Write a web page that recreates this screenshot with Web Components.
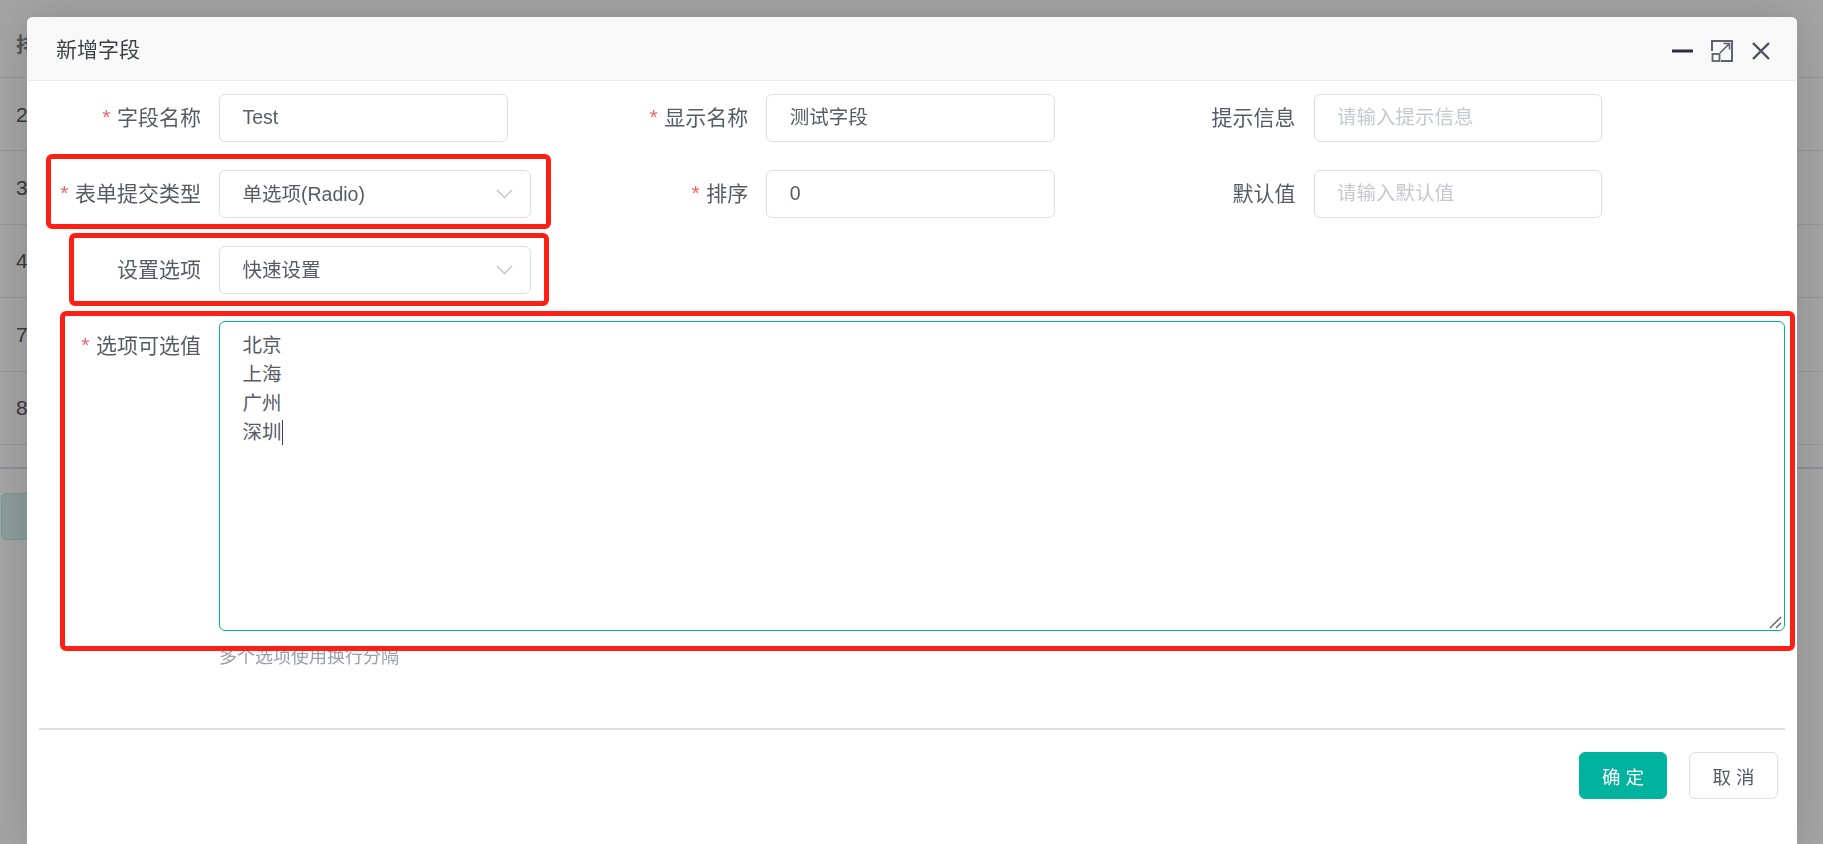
<!DOCTYPE html>
<html lang="zh-CN">
<head>
<meta charset="utf-8">
<title>新增字段</title>
<style>
html,body{margin:0;padding:0;height:100%;overflow:hidden;background:#a3a3a3;}
body{font-family:"Liberation Sans","Noto Sans CJK SC",sans-serif;color:#565b66;}
</style>
</head>
<body>
<x-backdrop></x-backdrop>
<x-dialog heading="新增字段">
  <x-form-row>
    <x-field label="字段名称" required><x-input value="Test"></x-input></x-field>
    <x-field label="显示名称" required><x-input value="测试字段"></x-input></x-field>
    <x-field label="提示信息"><x-input placeholder="请输入提示信息"></x-input></x-field>
  </x-form-row>
  <x-form-row>
    <x-field label="表单提交类型" required><x-select value="单选项(Radio)"></x-select></x-field>
    <x-field label="排序" required><x-input value="0"></x-input></x-field>
    <x-field label="默认值"><x-input placeholder="请输入默认值"></x-input></x-field>
  </x-form-row>
  <x-form-row>
    <x-field label="设置选项"><x-select value="快速设置"></x-select></x-field>
  </x-form-row>
  <x-form-row wide>
    <x-field label="选项可选值" required wide hint="多个选项使用换行分隔">
      <x-textarea lines="北京|上海|广州|深圳"></x-textarea>
    </x-field>
  </x-form-row>
  <x-button slot="footer" primary>确 定</x-button>
  <x-button slot="footer">取 消</x-button>
  <x-mark slot="marks" style="left:19px;top:137px;width:505px;height:75px"></x-mark>
  <x-mark slot="marks" style="left:42px;top:216px;width:480px;height:73px"></x-mark>
  <x-mark slot="marks" style="left:33px;top:294px;width:1735px;height:340px"></x-mark>
</x-dialog>

<script>
const def=(name,css,html)=>{
  class C extends HTMLElement{
    constructor(){super();const r=this.attachShadow({mode:'open'});
      r.innerHTML='<style>'+css+'</style>'+(typeof html==='function'?html(this):html);}
  }
  customElements.define(name,C);
};

def('x-backdrop',`
:host{position:fixed;inset:0;display:block;overflow:hidden;background:#a4a4a4;font-size:21px;color:#3a3a3e;}
.head{height:78px;box-sizing:border-box;display:flex;align-items:center;padding:9px 0 0 16px;border-bottom:1px solid #94949a;font-weight:700;color:#55565a;}
.row{height:73.4px;box-sizing:border-box;display:flex;align-items:center;padding-left:16px;border-bottom:1px solid #94949a;line-height:1;}
.end{height:24px;box-sizing:border-box;border-bottom:2px solid #8f8f96;}
.btn{margin:24px 0 0 1px;width:60px;height:47px;box-sizing:border-box;border:1px solid #6e9c95;border-radius:6px;background:#8b9c99;}
`,`<div class="head">排</div><div class="row">2</div><div class="row">3</div><div class="row">4</div><div class="row">7</div><div class="row">8</div><div class="end"></div><div class="btn"></div>`);

def('x-dialog',`
:host{position:absolute;left:27px;top:17px;width:1770px;height:827px;display:flex;flex-direction:column;background:#fff;border-radius:6px 6px 0 0;box-shadow:0 0 40px rgba(0,0,0,.14);}
header{height:64px;flex:none;box-sizing:border-box;padding:0 27px 0 29px;display:flex;align-items:center;background:#f8f8f8;border-bottom:1px solid #ececec;border-radius:6px 6px 0 0;}
h1{margin:0;flex:1;font:400 21px/1 "Liberation Sans","Noto Sans CJK SC",sans-serif;color:#3b3f48;position:relative;top:1px;}
.ctl{display:flex;align-items:center;gap:19px;margin-top:4px;}
svg{display:block;}
.min{margin-right:-1px;}
main{flex:none;padding:13px 0 0 32px;height:647px;box-sizing:border-box;}
.rule{flex:none;height:2px;margin:0 12px;background:#dcdee2;}
footer{flex:none;display:flex;justify-content:flex-end;gap:22px;padding:22px 19px 0 0;}
`,d=>`
<header><h1>${d.getAttribute('heading')}</h1>
<div class="ctl">
<svg class="min" width="21" height="4" viewBox="0 0 21 4"><path d="M0 2h21" stroke="#2c2d3f" stroke-width="3"/></svg>
<svg width="22" height="22" viewBox="0 0 22 22" fill="none" stroke="#5f626c" stroke-width="2"><path d="M1 11V1h20v20H10"/><rect x="1.5" y="14" width="7" height="7" stroke-width="1.8"/><path d="M9 13L18 4M12.5 3.5h6V9.500" stroke-width="1.6"/></svg>
<svg width="18" height="18" viewBox="0 0 18 18" fill="none" stroke="#4d505c" stroke-width="2.4"><path d="M1 1l16 16M17 1L1 17"/></svg>
</div></header>
<main><slot></slot></main>
<div class="rule"></div>
<footer><slot name="footer"></slot></footer>
<slot name="marks"></slot>`);

def('x-form-row',`
:host{display:grid;grid-template-columns:repeat(3,547.3px);height:48px;margin-bottom:28px;}
:host([wide]){display:block;height:auto;margin:-1px 0 0;}
`,`<slot></slot>`);

def('x-field',`
:host{display:flex;align-items:flex-start;font-size:21px;line-height:48px;color:#565b66;}
.lab{flex:none;width:160px;box-sizing:border-box;padding-right:18px;text-align:right;white-space:nowrap;}
:host([wide]) .lab{line-height:50px;}
.star{color:#f0636a;font-family:"Liberation Sans",sans-serif;margin-right:6.500px;position:relative;top:-1px;}
.ctrl{flex:1;min-width:0;}
.hint{font-size:18px;line-height:27px;color:#9a9ea8;margin-top:13px;white-space:nowrap;}
:host([wide]) .ctrl{width:1566px;flex:none;}
`,f=>`<div class="lab">${f.hasAttribute('required')?'<span class="star">*</span>':''}${f.getAttribute('label')}</div>
<div class="ctrl"><slot></slot>${f.hasAttribute('hint')?`<div class="hint">${f.getAttribute('hint')}</div>`:''}</div>`);

const boxCss=`
:host{display:block;box-sizing:border-box;height:48px;border:1px solid #dcdee2;border-radius:6px;background:#fff;padding:0 22.5px;font-size:19.5px;line-height:45px;color:#565b66;white-space:nowrap;}
.ph{color:#c5c8ce;}`;

def('x-input',boxCss+`:host{width:288.5px;}`,i=>i.hasAttribute('placeholder')?`<span class="ph">${i.getAttribute('placeholder')}</span>`:`<span>${i.getAttribute('value')}</span>`);

def('x-select',boxCss+`:host{width:312px;display:flex;align-items:center;justify-content:space-between;padding-right:17px;}svg{display:block;flex:none;}`,
s=>`<span>${s.getAttribute('value')}</span><svg width="17" height="10" viewBox="0 0 17 10" fill="none" stroke="#c0c4cc" stroke-width="1.5"><path d="M1 1l7.5 7.500L16 1"/></svg>`);

def('x-textarea',`
:host{display:block;position:relative;box-sizing:border-box;width:1566px;height:310px;border:1px solid #00b39f;border-radius:6px;background:#fff;padding:9px 22.5px;font-size:19.5px;line-height:29px;color:#565b66;}
.l{display:flex;align-items:center;height:29px;}
.c{display:inline-block;width:1px;height:25px;background:#3b3f48;}
svg{position:absolute;right:2px;bottom:1px;}
`,t=>{const a=t.getAttribute('lines').split('|');return a.map((x,i)=>`<div class="l"><span>${x}</span>${i===a.length-1?'<i class="c"></i>':''}</div>`).join('')+`<svg width="13" height="13" viewBox="0 0 13 13" fill="none" stroke="#5f5f5f" stroke-width="1.4"><path d="M1 12L12 1M7 12l5-5"/></svg>`});

def('x-button',`
:host{display:flex;align-items:center;justify-content:center;box-sizing:border-box;height:47px;width:89px;border:1px solid #dcdee2;border-radius:6px;background:#fff;color:#565b66;font-size:18.5px;white-space:pre;}
:host([primary]){width:88px;background:#00b39f;border-color:#00b39f;color:#fff;}
`,`<slot></slot>`);

def('x-mark',`
:host{position:absolute;display:block;box-sizing:border-box;border:5px solid #ff2015;border-radius:6px;pointer-events:none;}
`,``);
</script>
</body>
</html>
